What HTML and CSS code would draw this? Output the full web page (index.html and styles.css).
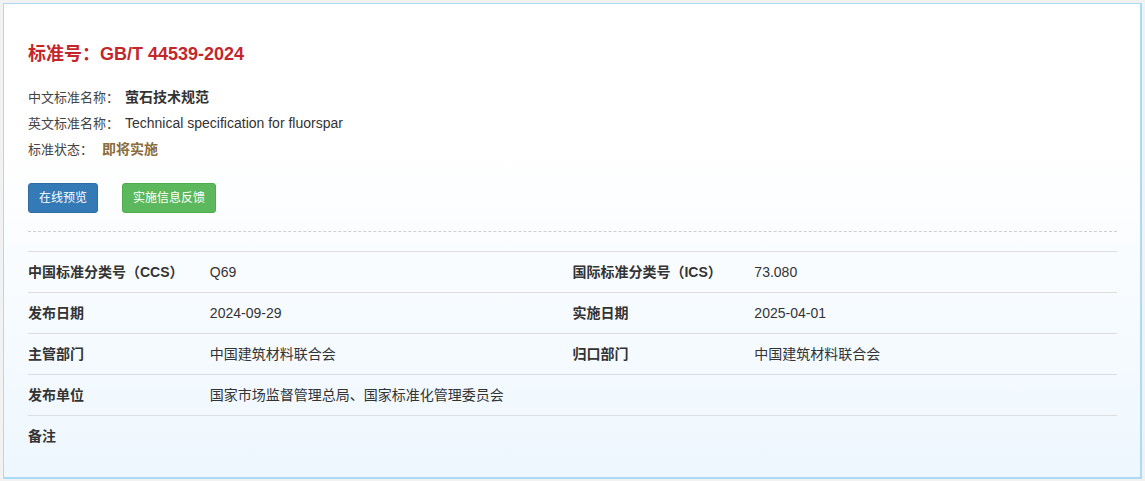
FILE: index.html
```html
<!DOCTYPE html>
<html lang="zh-CN">
<head>
  <meta charset="UTF-8">
  <meta name="viewport" content="width=device-width, initial-scale=1.0">
  <title>GB/T 44539-2024 萤石技术规范</title>
  <link rel="stylesheet" href="styles.css">
</head>
<body>
  <div class="panel">
    <h3 class="std-no">标准号：GB/T 44539-2024</h3>

    <!-- Names and status -->
    <div class="summary">
      <p>中文标准名称：<b class="val">萤石技术规范</b></p>
      <p>英文标准名称：<span class="val">Technical specification for fluorspar</span></p>
      <p>标准状态：<span class="val status">即将实施</span></p>
    </div>

    <div class="actions">
      <a class="btn btn-primary">在线预览</a>
      <a class="btn btn-success">实施信息反馈</a>
    </div>

    <div class="dash"></div>

    <table class="info">
      <colgroup>
        <col class="c-label"><col class="c-value"><col class="c-label"><col class="c-value">
      </colgroup>
      <tr>
        <th>中国标准分类号（CCS）</th><td>Q69</td>
        <th>国际标准分类号（ICS）</th><td>73.080</td>
      </tr>
      <tr>
        <th>发布日期</th><td>2024-09-29</td>
        <th>实施日期</th><td>2025-04-01</td>
      </tr>
      <tr>
        <th>主管部门</th><td>中国建筑材料联合会</td>
        <th>归口部门</th><td>中国建筑材料联合会</td>
      </tr>
      <tr>
        <th>发布单位</th><td colspan="3">国家市场监督管理总局、国家标准化管理委员会</td>
      </tr>
      <tr>
        <th>备注</th><td colspan="3"></td>
      </tr>
    </table>
  </div>
</body>
</html>
```

FILE: styles.css
```css
body {
  margin: 0;
  padding: 3px;
  background-color: #f2f2f2;
  font-family: "Liberation Sans", Arial, "Noto Sans CJK SC", sans-serif;
  font-size: 14px;
  color: #333;
}

.panel {
  box-sizing: border-box;
  height: 476px;
  border: 1px solid #a9dbf6;
  border-right-width: 2px;
  border-bottom-width: 2px;
  background: linear-gradient(to bottom, #ffffff 0%, #ffffff 30%, #eef7fe 100%);
  padding: 40px 23px 0 24px;
}

.std-no {
  margin: 0;
  font-size: 18px;
  line-height: 20px;
  font-weight: bold;
  color: #c3262b;
}

.summary {
  margin-top: 21px;
}

.summary p {
  margin: 0;
  height: 26px;
  font-size: 13px;
  line-height: 26px;
  color: #444;
}

.summary .val {
  font-size: 14px;
  line-height: 1;
  color: #333;
  margin-left: 6px;
}

.summary .status {
  font-weight: bold;
  color: #8a6d3b;
  margin-left: 9px;
}

.actions {
  margin-top: 20px;
  display: flex;
  gap: 24px;
}

.btn {
  display: inline-block;
  height: 30px;
  line-height: 28px;
  padding: 0 10px;
  font-size: 12px;
  color: #fff;
  border-radius: 3px;
  border: 1px solid transparent;
  box-sizing: border-box;
}

.btn-primary {
  background-color: #337ab7;
  border-color: #2e6da4;
}

.btn-success {
  background-color: #5cb85c;
  border-color: #4cae4c;
}

.dash {
  margin-top: 18px;
  border-top: 1px dashed #cfcfcf;
}

.info {
  margin-top: 19px;
  width: 100%;
  border-collapse: collapse;
  table-layout: fixed;
}

.c-label { width: 16.7%; }
.c-value { width: 33.3%; }

.info th,
.info td {
  border-top: 1px solid #dddddd;
  height: 40px;
  padding: 0;
  text-align: left;
  vertical-align: middle;
  line-height: 20px;
}

.info th {
  font-weight: bold;
  color: #333;
}

.info td {
  color: #333;
}
```
